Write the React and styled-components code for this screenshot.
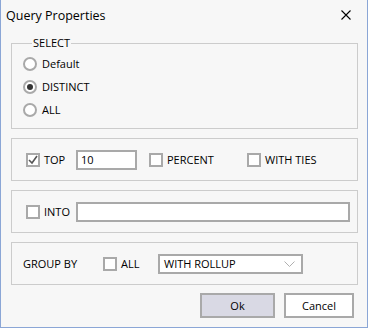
import styled, { createGlobalStyle } from "styled-components";

const Global = createGlobalStyle`
  body {
    margin: 0;
    background: #ffffff;
    font-family: "Open Sans", "Noto Sans", sans-serif;
    font-size: 11px;
    color: #000;
  }
`;

const Window = styled.div`
  width: 366px;
  height: 327px;
  background: #f7f7f7;
  border: 1px solid #8ba6d6;
  border-top: none;
  display: flex;
  flex-direction: column;
`;

const TitleBar = styled.div`
  height: 30px;
  display: flex;
  align-items: center;
  justify-content: space-between;
  padding-left: 5px;
  font-size: 12.5px;
`;

const Close = styled.svg`
  margin-right: 16px;
`;

const Body = styled.div`
  padding: 0 9px 0 10px;
  display: flex;
  flex-direction: column;
`;

const Fieldset = styled.fieldset`
  margin: 5px 0 0;
  padding: 1px 0 7px 11px;
  border: 1px solid #cccccc;
  min-width: 0;
`;

const Legend = styled.legend`
  padding: 0 1px;
  margin-left: 9px;
  line-height: 16px;
`;

const RadioRow = styled.label`
  height: 23px;
  display: flex;
  align-items: center;
  gap: 5px;
`;

const Radio = styled.span`
  width: 14px;
  height: 14px;
  box-sizing: border-box;
  border: 2px solid #a9a9a9;
  border-radius: 50%;
  background: #fff;
  display: flex;
  align-items: center;
  justify-content: center;
  &::after {
    content: "";
    width: 6px;
    height: 6px;
    border-radius: 50%;
    background: ${(p) => (p.$on ? "#333" : "transparent")};
  }
`;

const Group = styled.div`
  margin-top: 9px;
  height: 43px;
  box-sizing: border-box;
  border: 1px solid #cccccc;
  display: flex;
  align-items: center;
  padding-left: ${(p) => p.$pad || 14}px;
`;

const CheckItem = styled.label`
  display: flex;
  align-items: center;
  gap: 4px;
  width: ${(p) => (p.$w ? `${p.$w}px` : "auto")};
  margin-left: ${(p) => p.$ml || 0}px;
  flex-shrink: 0;
`;

const Box = styled.span`
  width: 14px;
  height: 14px;
  box-sizing: border-box;
  border: 2px solid #a9a9a9;
  background: #fff;
  display: flex;
  align-items: center;
  justify-content: center;
`;

const TextBox = styled.div`
  width: ${(p) => (p.$w ? `${p.$w}px` : "auto")};
  flex: ${(p) => (p.$w ? "none" : 1)};
  height: 20px;
  box-sizing: border-box;
  border: 2px solid #a9a9a9;
  background: #fff;
  padding-left: 3px;
  display: flex;
  align-items: center;
  margin-right: ${(p) => p.$mr || 0}px;
`;

const Label = styled.span`
  width: ${(p) => p.$w}px;
  flex-shrink: 0;
`;

const Select = styled.div`
  width: 145px;
  height: 20px;
  box-sizing: border-box;
  border: 2px solid #a9a9a9;
  background: #fff;
  display: flex;
  align-items: center;
  justify-content: space-between;
  padding: 0 6px 0 4px;
`;

const Buttons = styled.div`
  margin-top: 8px;
  display: flex;
  justify-content: flex-end;
  gap: 9px;
  padding-right: 4px;
`;

const Button = styled.button`
  width: ${(p) => p.$w}px;
  height: 25px;
  box-sizing: border-box;
  border: 2px solid #a9a9a9;
  background: ${(p) => (p.$primary ? "#d9d9e4" : "#ffffff")};
  font: inherit;
  color: #000;
  padding: 0;
`;

const Check = () => (
  <svg width="10" height="10" viewBox="0 0 10 10">
    <polyline points="1,5 4,8 9,1" fill="none" stroke="#555" strokeWidth="1.6" />
  </svg>
);

const Chevron = () => (
  <svg width="11" height="6" viewBox="0 0 11 6">
    <polyline points="0.5,0.5 5.5,5.5 10.5,0.5" fill="none" stroke="#b0b0b0" strokeWidth="1" />
  </svg>
);

const App = () => {
  return (
    <Window>
      <Global />
      <TitleBar>
        <span>Query Properties</span>
        <Close width="10" height="10" viewBox="0 0 10 10">
          <path d="M0.5 0.5 L9.5 9.5 M9.5 0.5 L0.5 9.5" stroke="#000" strokeWidth="1.1" />
        </Close>
      </TitleBar>
      <Body>
        <Fieldset>
          <Legend>SELECT</Legend>
          <RadioRow>
            <Radio />
            Default
          </RadioRow>
          <RadioRow>
            <Radio $on />
            DISTINCT
          </RadioRow>
          <RadioRow>
            <Radio />
            ALL
          </RadioRow>
        </Fieldset>

        <Group>
          <CheckItem $w={50}>
            <Box>
              <Check />
            </Box>
            TOP
          </CheckItem>
          <TextBox $w={61}>10</TextBox>
          <CheckItem $w={98} $ml={12}>
            <Box />
            PERCENT
          </CheckItem>
          <CheckItem>
            <Box />
            WITH TIES
          </CheckItem>
        </Group>

        <Group>
          <CheckItem $w={50}>
            <Box />
            INTO
          </CheckItem>
          <TextBox $mr={7} />
        </Group>

        <Group $pad={11}>
          <Label $w={80}>GROUP BY</Label>
          <CheckItem $w={55}>
            <Box />
            ALL
          </CheckItem>
          <Select>
            WITH ROLLUP
            <Chevron />
          </Select>
        </Group>

        <Buttons>
          <Button $w={75} $primary>Ok</Button>
          <Button $w={70}>Cancel</Button>
        </Buttons>
      </Body>
    </Window>
  );
};

export default App;
